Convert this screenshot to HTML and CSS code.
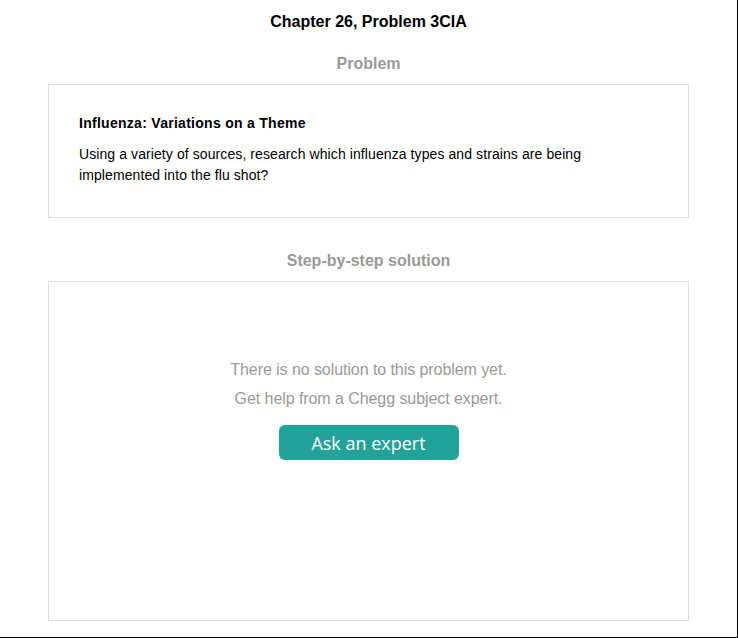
FILE: index.html
```html
<!DOCTYPE html>
<html>
<head>
<meta charset="utf-8">
<link rel="stylesheet" href="styles.css">
</head>
<body>
<div class="page">
  <h1 class="title">Chapter 26, Problem 3CIA</h1>
  <h2 class="section-title">Problem</h2>
  <div class="card problem-card">
    <h3 class="problem-heading">Influenza: Variations on a Theme</h3>
    <p class="problem-text">Using a variety of sources, research which influenza types and strains are being implemented into the flu shot?</p>
  </div>
  <h2 class="section-title solution-title">Step-by-step solution</h2>
  <div class="card solution-card">
    <p class="empty-text">There is no solution to this problem yet.</p>
    <p class="empty-text">Get help from a Chegg subject expert.</p>
    <button class="ask-btn">Ask an expert</button>
  </div>
</div>
</body>
</html>
```
FILE: styles.css
```css
html, body {
  margin: 0;
  padding: 0;
  background: #fff;
}
body {
  font-family: "Liberation Sans", Arial, sans-serif;
  color: #000;
}
.page {
  width: 738px;
  height: 638px;
  border-right: 1px solid #000;
  border-bottom: 1px solid #000;
  padding-top: 12px;
  display: flex;
  flex-direction: column;
  align-items: center;
  box-sizing: border-box;
}
.title {
  margin: 0;
  font-size: 16px;
  line-height: 20px;
  font-weight: bold;
  text-align: center;
}
.section-title {
  margin: 22px 0 10px;
  font-size: 16px;
  line-height: 20px;
  font-weight: bold;
  color: #999;
  text-align: center;
}
.solution-title {
  margin-top: 33px;
}
.card {
  width: 641px;
  box-sizing: border-box;
  border: 1px solid #ddd;
}
.problem-card {
  height: 134px;
  padding: 29px 30px 0 30px;
}
.problem-heading {
  margin: 0;
  font-size: 14px;
  line-height: 18px;
  font-weight: bold;
  letter-spacing: 0.28px;
}
.problem-text {
  margin: 12px 0 0;
  font-size: 14px;
  line-height: 21px;
  letter-spacing: 0.09px;
}
.solution-card {
  height: 340px;
  padding-top: 73px;
  display: flex;
  flex-direction: column;
  align-items: center;
}
.empty-text {
  margin: 0;
  font-size: 16px;
  line-height: 29px;
  color: #999;
  letter-spacing: -0.07px;
}
.ask-btn {
  margin-top: 12px;
  width: 180px;
  height: 35px;
  border: none;
  border-radius: 6px;
  background: #22a39a;
  color: #fff;
  font-family: "Open Sans", sans-serif;
  font-size: 18px;
  padding: 0;
}
```
